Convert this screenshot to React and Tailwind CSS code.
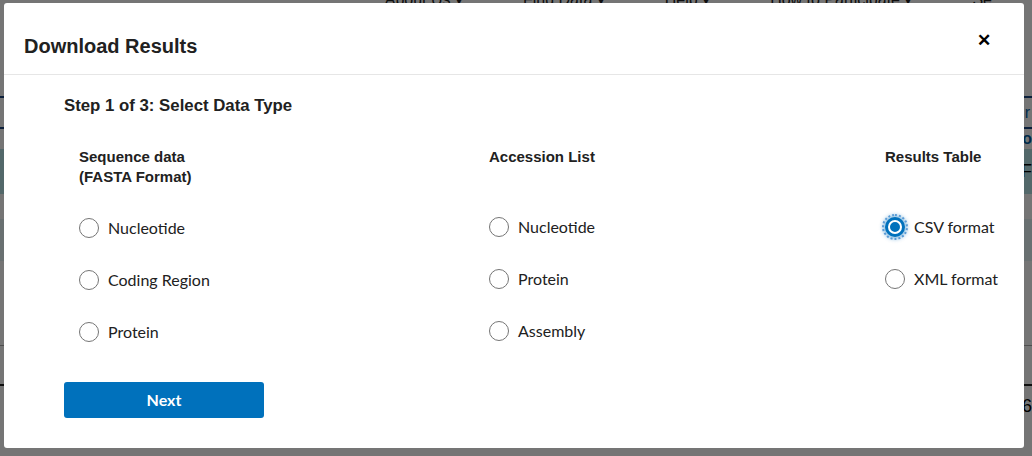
import React from "react";

function Radio({ label, checked }) {
  return (
    <label className="flex h-[52px] items-center gap-[9px]">
      {checked ? (
        <span className="relative flex h-[20px] w-[20px] items-center justify-center rounded-full bg-[#0071bc] outline-2 outline-dotted outline-offset-1 outline-[#5b9bd5] shadow-[0_0_4px_2px_rgba(0,113,188,0.45)]">
          <span className="h-[14px] w-[14px] rounded-full border-2 border-white bg-[#0071bc]" />
        </span>
      ) : (
        <span className="h-[20px] w-[20px] rounded-full border border-[#757575] bg-white" />
      )}
      <span className="font-['Lato','Open_Sans',sans-serif] text-[16px] text-[#212121]">{label}</span>
    </label>
  );
}

function Column({ title, items, width, checkedIndex = -1, headH = "h-[55px]" }) {
  return (
    <div className={width}>
      <div className={`${headH} text-[15px] font-bold leading-[20px] text-[#212121]`}>
        {title}
      </div>
      <div className="flex flex-col">
        {items.map((it, i) => (
          <Radio key={it} label={it} checked={i === checkedIndex} />
        ))}
      </div>
    </div>
  );
}

export default function App() {
  return (
    <div className="relative h-[456px] w-[1032px] overflow-hidden bg-white font-['Liberation_Sans',Arial,sans-serif]">
      {/* background page */}
      <div className="flex h-full flex-col">
        <div className="flex h-[8px] justify-end gap-[60px] pr-[40px] text-[16px] leading-[8px] text-[#222]">
          <span className="-mt-[4px]">About Us ▾</span>
          <span className="-mt-[4px]">Find Data ▾</span>
          <span className="-mt-[4px]">Help ▾</span>
          <span className="-mt-[4px]">How to Participate ▾</span>
          <span className="-mt-[4px]">Se</span>
        </div>
        <div className="h-[88px]" />
        <div className="flex h-[33px] items-center justify-end border-y-2 border-[#1a4480] pr-[2px] text-[16px] text-[#005ea2]">
          <span>Fir</span>
        </div>
        <div className="flex h-[20px] items-center justify-end text-[16px] font-bold text-[#005ea2]">Co</div>
        <div className="flex h-[45px] items-center justify-end bg-[#b6e3e6] text-[18px]">F</div>
        <div className="h-[25px]" />
        <div className="h-[42px] bg-[#e5f4f6]" />
        <div className="h-[85px] border-b border-[#aaa]" />
        <div className="h-[40px] border-b-2 border-[#222]" />
        <div className="flex h-[40px] items-center justify-end text-[18px]">6</div>
      </div>
      {/* overlay */}
      <div className="absolute inset-0 bg-black/[0.54]" />
      {/* modal */}
      <div className="absolute left-[4px] top-[3px] flex h-[445px] w-[1020px] flex-col rounded-[3px] bg-white">
        <div className="flex h-[72px] items-center justify-between border-b border-[#e6e6e6] pl-[20px] pr-[33px]">
          <h2 className="pt-[14px] text-[20px] font-bold text-[#212121]">Download Results</h2>
          <span className="pt-[4px] text-[17px] font-bold leading-none text-black">✕</span>
        </div>
        <div className="pl-[60px] pt-[20px]">
          <div className="text-[16.8px] font-bold leading-[22px] text-[#212121]">Step 1 of 3: Select Data Type</div>
          <div className="mt-[30px] flex pl-[15px]">
            <Column
              width="w-[410px]"
              title={<>Sequence data<br />(FASTA Format)</>}
              items={["Nucleotide", "Coding Region", "Protein"]}
            />
            <Column
              width="w-[396px]"
              title="Accession List"
              items={["Nucleotide", "Protein", "Assembly"]}
              headH="h-[54px]"
            />
            <Column
              width="w-[130px]"
              title="Results Table"
              items={["CSV format", "XML format"]}
              checkedIndex={0}
              headH="h-[54px]"
            />
          </div>
          <button className="mt-[24px] flex h-[36px] w-[200px] items-center justify-center rounded-[3px] bg-[#0071bc] font-['Lato','Open_Sans',sans-serif] text-[16px] font-bold text-white">
            Next
          </button>
        </div>
      </div>
    </div>
  );
}
